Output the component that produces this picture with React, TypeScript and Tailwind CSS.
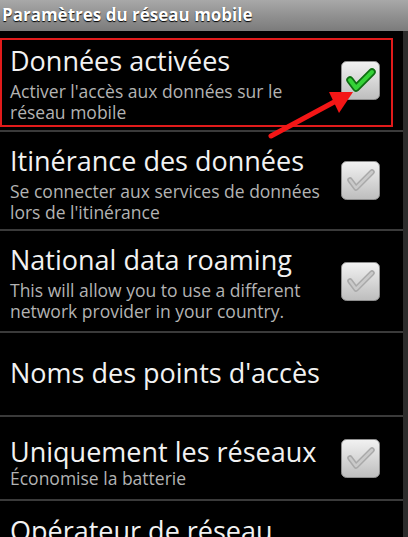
import React from "react";

type RowProps = {
    title: string;
    summary?: string;
    checked?: boolean;
    showBox?: boolean;
    textClass: string;
    summaryClass?: string;
    children?: React.ReactNode;
};

const CheckBox = ({ checked }: { checked: boolean }) => (
    <svg width="39" height="39" viewBox="0 0 39 39" className="shrink-0">
        <defs>
            <linearGradient id={checked ? "boxOn" : "boxOff"} x1="0" y1="0" x2="0" y2="1">
                <stop offset="0" stopColor="#f2f2f2" />
                <stop offset="1" stopColor="#bdbdbd" />
            </linearGradient>
        </defs>
        <rect x="0.5" y="0.5" width="38" height="38" rx="5" fill={`url(#${checked ? "boxOn" : "boxOff"})`} stroke="#8e8e8e" strokeWidth="1" />
        {checked ? (
            <>
                <polyline points="9,19 15,27 31,11" fill="none" stroke="#0f6e12" strokeWidth="7.5" strokeLinecap="round" strokeLinejoin="round" />
                <polyline points="9,19 15,27 31,11" fill="none" stroke="#35d237" strokeWidth="4" strokeLinecap="round" strokeLinejoin="round" />
            </>
        ) : (
            <>
                <polyline points="9,19 15,27 31,11" fill="none" stroke="#a9a9a9" strokeWidth="5.5" strokeLinecap="round" strokeLinejoin="round" />
                <polyline points="9,19 15,27 31,11" fill="none" stroke="#cacaca" strokeWidth="2.5" strokeLinecap="round" strokeLinejoin="round" />
            </>
        )}
    </svg>
);

const Row = ({ title, summary, checked = false, showBox = true, textClass, summaryClass = "mt-[4px]", children }: RowProps) => (
    <div className="relative flex items-center border-b-2 border-[#3a3a3a] pl-[10px] pr-[23px]">
        <div className={`flex-1 ${textClass}`}>
            <div className="text-[27px] leading-[32px] text-[#f2f2f2] whitespace-nowrap">{title}</div>
            {summary && (
                <div className={`max-w-[325px] text-[17.5px] leading-[21px] text-[#b3b3b3] ${summaryClass}`}>{summary}</div>
            )}
        </div>
        {showBox && <CheckBox checked={checked} />}
        {children}
    </div>
);

export default function App() {
    return (
        <div className="w-[408px] h-[537px] overflow-hidden bg-black" style={{ fontFamily: '"Open Sans", "Noto Sans", sans-serif' }}>
            <div className="h-[31px] flex items-center pl-[2px] pb-[2px] bg-gradient-to-b from-[#a8a8a8] to-[#7b7b7b] text-[17px] font-bold text-white [text-shadow:0_1px_1px_#000]">
                Paramètres du réseau mobile
            </div>
            <div className="relative flex">
                <div className="flex-1 flex flex-col">
                    <Row
                        title="Données activées"
                        summary="Activer l'accès aux données sur le réseau mobile"
                        checked
                        textClass="pt-[14px] pb-[7px]"
                    >
                        <div className="absolute left-0 right-[10px] top-[7px] bottom-[3px] border-2 border-[#e11b1b] pointer-events-none" />
                    </Row>
                    <Row
                        title="Itinérance des données"
                        summary="Se connecter aux services de données lors de l'itinérance"
                        textClass="pt-[13px] pb-[6px]"
                    />
                    <Row
                        title="National data roaming"
                        summary="This will allow you to use a different network provider in your country."
                        textClass="pt-[13px] pb-[9px]"
                    />
                    <Row title="Noms des points d'accès" showBox={false} textClass="pt-[24px] pb-[26px]" />
                    <Row
                        title="Uniquement les réseaux"
                        summary="Économise la batterie"
                        textClass="pt-[19px] pb-[10px]"
                        summaryClass="mt-0"
                    />
                    <Row
                        title="Opérateur de réseau"
                        summary="Sélectionner un opérateur réseau"
                        showBox={false}
                        textClass="pt-[14px] pb-[16px]"
                    />
                </div>
                <div className="w-[5px] shrink-0 bg-[#2c2c2c]" />
                <svg className="absolute left-0 top-0 pointer-events-none" width="408" height="200" viewBox="0 31 408 200">
                    <line x1="271" y1="136" x2="336" y2="101" stroke="#f41616" strokeWidth="5" strokeLinecap="round" />
                    <polygon points="353,92 329,92 339,113" fill="#f41616" />
                </svg>
            </div>
        </div>
    );
}
